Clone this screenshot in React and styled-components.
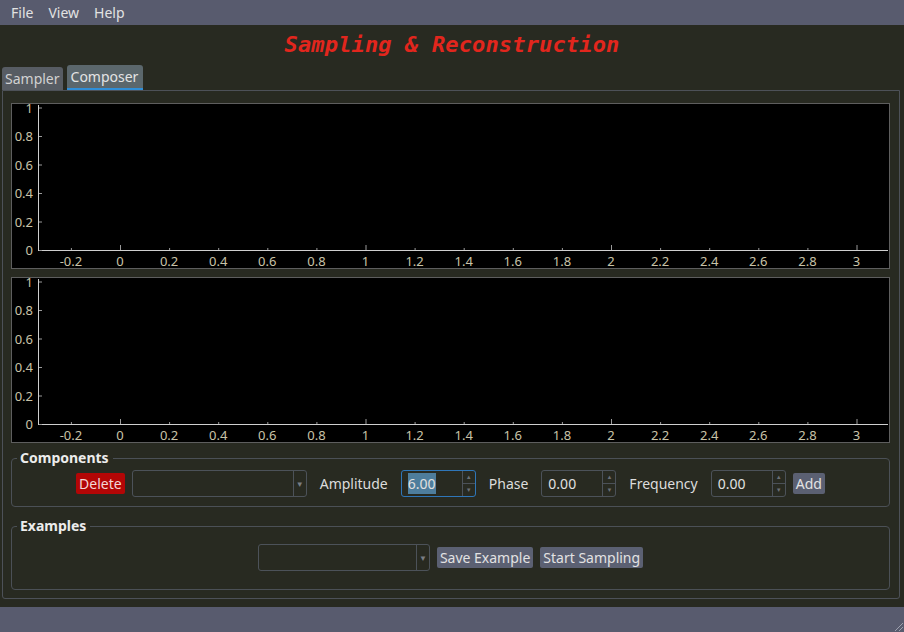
import React from 'react';
import styled, { createGlobalStyle } from 'styled-components';

const GlobalStyle = createGlobalStyle`
  html, body { margin: 0; padding: 0; }
  body {
    background: #282a21;
    font-family: "Noto Sans", "Open Sans", sans-serif;
    font-size: 14px;
    color: #dedede;
  }
`;

const Window = styled.div`
  display: flex;
  flex-direction: column;
  height: 632px;
  overflow: hidden;
`;

const MenuBar = styled.div`
  display: flex;
  align-items: center;
  gap: 15px;
  height: 25px;
  padding-left: 11px;
  background: #585b6e;
  color: #e2e2e2;
`;

const Title = styled.h1`
  margin: 0;
  height: 39px;
  display: flex;
  align-items: center;
  justify-content: center;
  font-family: "DejaVu Sans Mono", monospace;
  font-style: italic;
  font-weight: bold;
  font-size: 22px;
  letter-spacing: 0.15px;
  color: #e2261d;
`;

const TabBar = styled.div`
  display: flex;
  align-items: flex-end;
  gap: 4px;
  height: 26px;
  padding-left: 2px;
`;

const Tab = styled.div`
  height: ${p => (p.$active ? '25px' : '23px')};
  box-sizing: border-box;
  padding: ${p => (p.$active ? '0 5px 0 4px' : '0 3px')};
  display: flex;
  align-items: center;
  border-radius: 3px 3px 0 0;
  background: ${p => (p.$active ? '#5b676c' : '#575c63')};
  color: ${p => (p.$active ? '#e4e4e4' : '#d2d2d2')};
  border-bottom: ${p => (p.$active ? '2px solid #2f8fd8' : 'none')};
`;

const Panel = styled.div`
  flex: 1;
  margin: 0 4px 8px 2px;
  padding: 12px 9px 0 8px;
  border: 1px solid #4d5158;
  border-radius: 0 0 3px 3px;
  display: flex;
  flex-direction: column;
`;

const PlotBox = styled.div`
  height: 166px;
  box-sizing: border-box;
  border: 1px solid #5e5e5e;
  background: #000;
  margin-bottom: ${p => p.$gap || 0}px;
  svg { display: block; }
`;

const Group = styled.fieldset`
  margin: ${p => p.$top}px 0 0 0;
  padding: ${p => p.$padTop}px 8px ${p => p.$padBottom}px;
  border: 1px solid #4b5056;
  border-radius: 4px;
  min-width: 0;

  legend {
    padding: 0 4px 0 3px;
    margin-left: -3px;
    font-weight: bold;
    font-size: 14px;
    line-height: 18px;
    color: #ececec;
  }
`;

const Row = styled.div`
  display: flex;
  align-items: center;
  justify-content: center;
  gap: 7px;
`;

const Button = styled.button`
  height: 21px;
  padding: 0 3px;
  border: none;
  border-radius: 2px;
  font-family: "Noto Sans", "Open Sans", sans-serif;
  font-size: 14px;
  background: ${p => (p.$danger ? '#b30606' : '#5b6072')};
  color: ${p => (p.$danger ? '#f3d6d6' : '#e2e2e2')};
`;

const Combo = styled.div`
  width: ${p => p.$w}px;
  height: 27px;
  box-sizing: border-box;
  border: 1px solid #4c5259;
  border-radius: 3px;
  display: flex;
  justify-content: flex-end;

  span {
    width: 12px;
    border-left: 1px solid #4c5259;
    display: flex;
    align-items: center;
    justify-content: center;
    font-size: 8px;
    color: #7a7e84;
  }
`;

const Label = styled.span`
  margin: 0 6px;
  color: #dcdcdc;
`;

const Spin = styled.div`
  width: 75px;
  height: 27px;
  box-sizing: border-box;
  border: 1px solid ${p => (p.$focus ? '#2f76b8' : '#4c5259')};
  border-radius: 3px;
  display: flex;
  align-items: center;
  padding-left: 6px;
`;

const SpinText = styled.span`
  flex: 1;
  color: #e0e0e0;
  span {
    background: ${p => (p.$selected ? '#4e7d9c' : 'transparent')};
    padding: 1px 0;
  }
`;

const SpinArrows = styled.div`
  width: 12px;
  height: 100%;
  border-left: 1px solid #4c5259;
  display: flex;
  flex-direction: column;

  i {
    flex: 1;
    display: flex;
    align-items: center;
    justify-content: center;
    font-style: normal;
    font-size: 6px;
    color: #6c7076;
  }
  i + i { border-top: 1px solid #4c5259; }
`;

const StatusBar = styled.div`
  height: 25px;
  background: #585b6e;
  display: flex;
  justify-content: flex-end;
  align-items: flex-end;
  svg { display: block; }
`;

const xTicks = Array.from({ length: 17 }, (_, i) => Math.round((i * 0.2 - 0.2) * 10) / 10);
const yTicks = [0, 0.2, 0.4, 0.6, 0.8, 1];
const px = v => 108 + 245.5 * v;
const py = v => 146 - 142.5 * v;

const Plot = ({ gap }) => (
  <PlotBox $gap={gap}>
    <svg width="876" height="164" fontFamily="Noto Sans, sans-serif" fontSize="13">
      <line x1="26.5" y1="1" x2="26.5" y2="146" stroke="#cfcfcf" />
      <line x1="26" y1="146.5" x2="876" y2="146.5" stroke="#cfcfcf" />
      {yTicks.map(v => (
        <g key={v}>
          <line x1="27" y1={py(v) + 0.5} x2="30" y2={py(v) + 0.5} stroke="#9a9a9a" />
          <text x="21" y={py(v) + 5} textAnchor="end" fill="#c9c3a8">{v}</text>
        </g>
      ))}
      {xTicks.map(v => (
        <g key={v}>
          <line
            x1={px(v) + 0.5} y1="146" x2={px(v) + 0.5}
            y2={Number.isInteger(v) ? 141 : 144}
            stroke="#9a9a9a"
          />
          <text x={px(v)} y="162" textAnchor="middle" fill="#c9c3a8">{v}</text>
        </g>
      ))}
    </svg>
  </PlotBox>
);

const SpinBox = ({ value, focus }) => (
  <Spin $focus={focus}>
    <SpinText $selected={focus}><span>{value}</span></SpinText>
    <SpinArrows><i>▲</i><i>▼</i></SpinArrows>
  </Spin>
);

const App = () => (
  <Window>
    <GlobalStyle />
    <MenuBar>
      <span>File</span>
      <span>View</span>
      <span>Help</span>
    </MenuBar>
    <Title>Sampling &amp; Reconstruction</Title>
    <TabBar>
      <Tab>Sampler</Tab>
      <Tab $active>Composer</Tab>
    </TabBar>
    <Panel>
      <Plot gap={8} />
      <Plot />
      <Group $top={6} $padTop={3} $padBottom={9}>
        <legend>Components</legend>
        <Row>
          <Button $danger>Delete</Button>
          <Combo $w={175}><span>▼</span></Combo>
          <Label>Amplitude</Label>
          <SpinBox value="6.00" focus />
          <Label>Phase</Label>
          <SpinBox value="0.00" />
          <Label>Frequency</Label>
          <SpinBox value="0.00" />
          <Button>Add</Button>
        </Row>
      </Group>
      <Group $top={10} $padTop={9} $padBottom={18}>
        <legend>Examples</legend>
        <Row>
          <Combo $w={172}><span>▼</span></Combo>
          <Button>Save Example</Button>
          <Button>Start Sampling</Button>
        </Row>
      </Group>
    </Panel>
    <StatusBar>
      <svg width="12" height="12">
        <line x1="11" y1="3" x2="3" y2="11" stroke="#9da0ad" />
        <line x1="11" y1="7" x2="7" y2="11" stroke="#9da0ad" />
      </svg>
    </StatusBar>
  </Window>
);

export default App;
